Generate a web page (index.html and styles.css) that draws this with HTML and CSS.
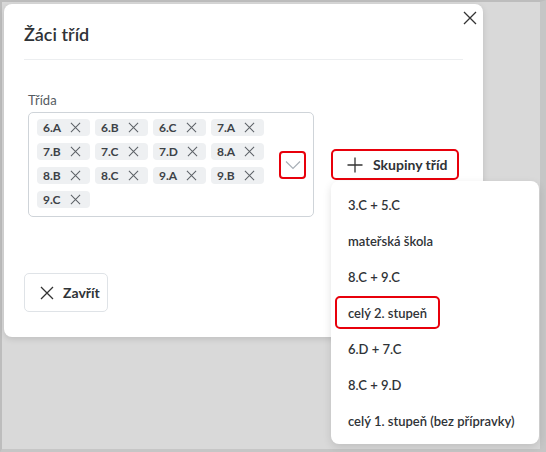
FILE: index.html
```html
<!DOCTYPE html>
<html lang="cs">
<head>
<meta charset="utf-8">
<title>Žáci tříd</title>
<link rel="stylesheet" href="styles.css">
</head>
<body>
<div class="frame">
  <div class="modal">
    <button class="close" aria-label="Zavřít">
      <svg width="14" height="14" viewBox="0 0 14 14"><path d="M1 1L13 13M13 1L1 13" stroke="#333" stroke-width="1.3" fill="none"/></svg>
    </button>
    <div class="header"><h1 class="title">Žáci tříd</h1></div>
    <div class="body">
      <div class="label">Třída</div>
      <div class="row">
        <div class="select">
          <div class="tags">
            <span class="tag">6.A<svg class="x" viewBox="0 0 12 12"><path d="M1 1L11 11M11 1L1 11"/></svg></span>
            <span class="tag">6.B<svg class="x" viewBox="0 0 12 12"><path d="M1 1L11 11M11 1L1 11"/></svg></span>
            <span class="tag">6.C<svg class="x" viewBox="0 0 12 12"><path d="M1 1L11 11M11 1L1 11"/></svg></span>
            <span class="tag">7.A<svg class="x" viewBox="0 0 12 12"><path d="M1 1L11 11M11 1L1 11"/></svg></span>
            <span class="tag">7.B<svg class="x" viewBox="0 0 12 12"><path d="M1 1L11 11M11 1L1 11"/></svg></span>
            <span class="tag">7.C<svg class="x" viewBox="0 0 12 12"><path d="M1 1L11 11M11 1L1 11"/></svg></span>
            <span class="tag">7.D<svg class="x" viewBox="0 0 12 12"><path d="M1 1L11 11M11 1L1 11"/></svg></span>
            <span class="tag">8.A<svg class="x" viewBox="0 0 12 12"><path d="M1 1L11 11M11 1L1 11"/></svg></span>
            <span class="tag">8.B<svg class="x" viewBox="0 0 12 12"><path d="M1 1L11 11M11 1L1 11"/></svg></span>
            <span class="tag">8.C<svg class="x" viewBox="0 0 12 12"><path d="M1 1L11 11M11 1L1 11"/></svg></span>
            <span class="tag">9.A<svg class="x" viewBox="0 0 12 12"><path d="M1 1L11 11M11 1L1 11"/></svg></span>
            <span class="tag">9.B<svg class="x" viewBox="0 0 12 12"><path d="M1 1L11 11M11 1L1 11"/></svg></span>
            <span class="tag">9.C<svg class="x" viewBox="0 0 12 12"><path d="M1 1L11 11M11 1L1 11"/></svg></span>
          </div>
          <div class="chevron">
            <svg width="16" height="10" viewBox="0 0 16 10"><path d="M1 1.5L8 8.5L15 1.5" stroke="#a9b0b7" stroke-width="1.2" fill="none"/></svg>
          </div>
        </div>
        <div class="groups">
          <button class="groups-btn">
            <svg width="16" height="16" viewBox="0 0 16 16"><path d="M8 0.5V15.5M0.5 8H15.5" stroke="#333" stroke-width="1.3" fill="none"/></svg>
            <span>Skupiny tříd</span>
          </button>
          <ul class="menu">
            <li class="item">3.C + 5.C</li>
            <li class="item">mateřská škola</li>
            <li class="item">8.C + 9.C</li>
            <li class="item active">celý 2. stupeň</li>
            <li class="item">6.D + 7.C</li>
            <li class="item">8.C + 9.D</li>
            <li class="item">celý 1. stupeň (bez přípravky)</li>
          </ul>
        </div>
      </div>
    </div>
    <div class="footer">
      <button class="close-btn">
        <svg width="14" height="14" viewBox="0 0 14 14"><path d="M1 1L13 13M13 1L1 13" stroke="#333" stroke-width="1.3" fill="none"/></svg>
        <span>Zavřít</span>
      </button>
    </div>
  </div>
</div>
</body>
</html>
```

FILE: styles.css
```css
* { box-sizing: border-box; }
html, body { margin: 0; padding: 0; }
body {
  width: 546px;
  height: 452px;
  font-family: Lato, "Noto Sans", sans-serif;
  color: #2f3337;
  overflow: hidden;
}
.frame {
  width: 546px;
  height: 452px;
  background: #d9d9d9;
  border: 2px solid #bdbdbd;
  border-right-width: 6px;
  border-bottom-width: 3px;
  border-right-color: #c6c6c6;
  border-bottom-color: #c6c6c6;
  padding: 2px;
}
.modal {
  position: relative;
  width: 479px;
  height: 333px;
  background: #fff;
  border-radius: 8px;
  box-shadow: 0 2px 6px rgba(0,0,0,0.12);
  padding: 0 20px;
}
.close {
  position: absolute;
  top: 7px;
  right: 6px;
  border: 0;
  background: none;
  padding: 0;
  width: 14px;
  height: 14px;
  display: flex;
}
.header {
  height: 56px;
  border-bottom: 1px solid #eceef0;
  display: flex;
  align-items: center;
  padding-top: 4px;
}
.title {
  margin: 0;
  font-size: 18px;
  font-weight: 600;
  color: #2f3337;
}
.body {
  padding: 32px 4px 0;
}
.label {
  font-size: 13px;
  color: #555b61;
  line-height: 16px;
  margin-bottom: 4px;
}
.row {
  display: flex;
  align-items: center;
  gap: 17px;
}
.select {
  width: 288px;
  height: 105px;
  border: 1px solid #cfd4d9;
  border-radius: 5px;
  display: flex;
  align-items: center;
  padding: 6px 7px 6px 8px;
}
.tags {
  flex: 1;
  align-self: flex-start;
  display: flex;
  flex-wrap: wrap;
  gap: 7px 5px;
}
.tag {
  display: inline-flex;
  align-items: center;
  height: 17px;
  width: 53px;
  background: #eef0f2;
  border-radius: 4px;
  padding: 0 0 0 6px;
  font-size: 12px;
  font-weight: 700;
  color: #3d4247;
}
.tag .x {
  width: 11px;
  height: 11px;
  margin-left: 9px;
  stroke: #5c6166;
  stroke-width: 1.1;
  fill: none;
}
.chevron {
  width: 27px;
  height: 28px;
  border: 2px solid #e8000b;
  border-radius: 4px;
  display: flex;
  align-items: center;
  justify-content: center;
}
.groups {
  position: relative;
}
.groups-btn {
  display: flex;
  align-items: center;
  gap: 10px;
  height: 31px;
  width: 128px;
  border: 2px solid #e8000b;
  border-radius: 5px;
  background: #fff;
  padding: 0 0 0 14px;
  font-family: inherit;
  font-size: 14px;
  font-weight: 700;
  color: #2f3337;
}
.menu {
  position: absolute;
  top: 32px;
  left: 0;
  width: 208px;
  margin: 0;
  padding: 7px 0;
  list-style: none;
  background: #fff;
  border-radius: 8px;
  box-shadow: 0 3px 8px rgba(0,0,0,0.12);
  display: flex;
  flex-direction: column;
  align-items: flex-start;
  gap: 3px;
  z-index: 2;
}
.item {
  height: 33px;
  margin-left: 4px;
  padding: 0 11px;
  border: 2px solid transparent;
  border-radius: 5px;
  display: flex;
  align-items: center;
  font-size: 13px;
  font-weight: 600;
  color: #2f3337;
  white-space: nowrap;
}
.item.active {
  border-color: #e8000b;
}
.footer {
  padding-top: 56px;
}
.close-btn {
  display: flex;
  align-items: center;
  gap: 9px;
  height: 39px;
  width: 84px;
  border: 1px solid #dfe3e7;
  border-radius: 5px;
  background: #fff;
  padding: 0 0 0 15px;
  font-family: inherit;
  font-size: 14px;
  font-weight: 700;
  color: #2f3337;
}
```
